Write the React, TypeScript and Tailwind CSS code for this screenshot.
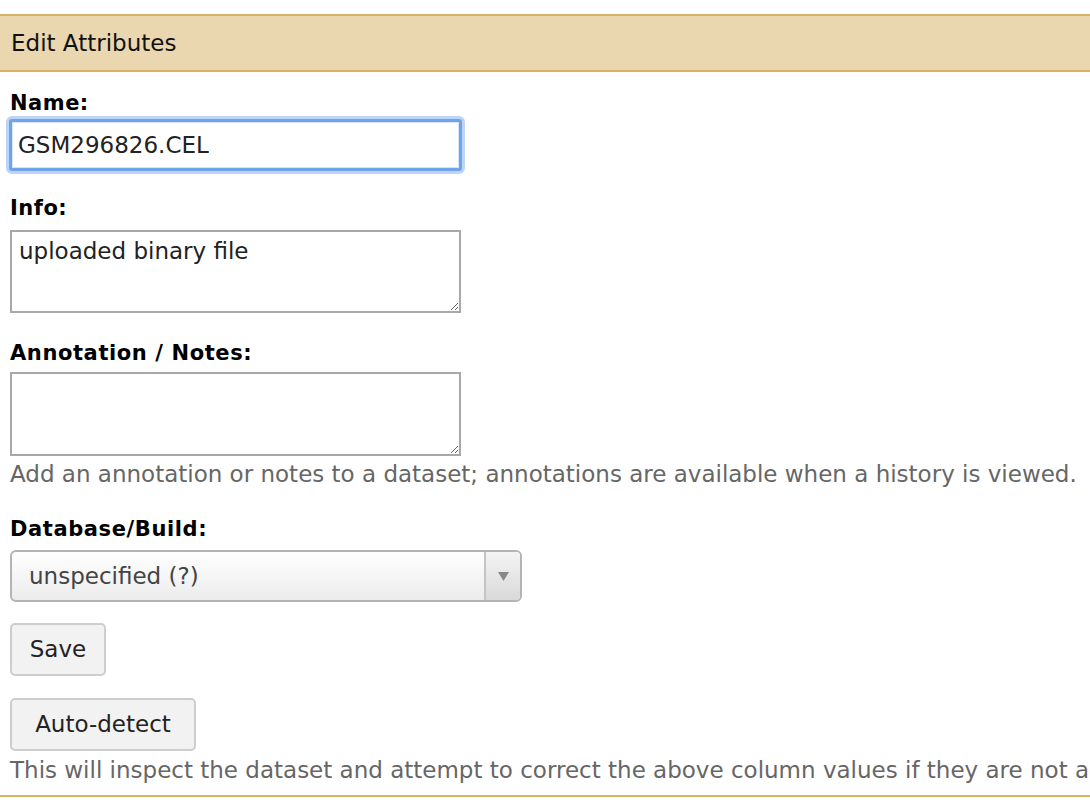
import React, { useState } from 'react';

export default function App() {
  const [name, setName] = useState('GSM296826.CEL');
  const [info, setInfo] = useState('uploaded binary file');
  const [notes, setNotes] = useState('');
  const [build, setBuild] = useState('?');

  return (
    <div className="min-h-[800px] overflow-hidden bg-white pt-[14px] font-['DejaVu_Sans',sans-serif] text-[#222]">
      {/* Header */}
      <div className="flex h-[58px] items-center border-y-2 border-[#d6b264] bg-[#ead7b0] px-[11px] text-[23px] text-[#111]">
        Edit Attributes
      </div>

      <form
        onSubmit={(e) => e.preventDefault()}
        className="flex flex-col items-start border-b-2 border-[#d6b264] px-[10px] pb-[13px]"
      >
        {/* Name */}
        <label className="mt-[19px] text-[21px] leading-[24px] font-bold tracking-[0.5px] text-black">Name:</label>
        <input
          type="text"
          value={name}
          onChange={(e) => setName(e.target.value)}
          className="ml-[-1px] mt-[4px] h-[52px] w-[453px] rounded-[3px] border-[3px] border-[#6fa3ea] bg-white pl-[6px] text-[23px] text-[#222] shadow-[0_0_0_3px_#bcd5f6,inset_0_0_0_1px_#d4e4f9] outline-none"
        />

        {/* Info */}
        <label className="mt-[25px] text-[21px] leading-[24px] font-bold tracking-[0.5px] text-black">Info:</label>
        <textarea
          value={info}
          onChange={(e) => setInfo(e.target.value)}
          className="mt-[10px] h-[83px] w-[451px] border-2 border-[#a8a8a8] px-[7px] pt-[5px] text-[23px] leading-[28px] text-[#222] outline-none"
        />

        {/* Annotation */}
        <label className="mt-[28px] text-[21px] leading-[24px] font-bold tracking-[0.6px] text-black">Annotation / Notes:</label>
        <textarea
          value={notes}
          onChange={(e) => setNotes(e.target.value)}
          className="mt-[7px] h-[84px] w-[451px] border-2 border-[#a8a8a8] px-[7px] pt-[5px] text-[23px] leading-[28px] text-[#222] outline-none"
        />
        <div className="mt-[6px] whitespace-nowrap text-[23px] leading-[24px] text-[#666]">
          Add an annotation or notes to a dataset; annotations are available when a history is viewed.
        </div>

        {/* Database / Build */}
        <label className="mt-[31px] text-[21px] leading-[24px] font-bold tracking-[0.6px] text-black">Database/Build:</label>
        <div className="mt-[9px] flex h-[52px] w-[512px] overflow-hidden rounded-[6px] border-2 border-[#b4b4b4] bg-gradient-to-b from-white to-[#ececec]">
          <button
            type="button"
            onClick={() => setBuild(build)}
            className="flex flex-1 items-center pl-[17px] text-left text-[23px] text-[#444]"
          >
            unspecified (?)
          </button>
          <div className="flex w-[36px] items-center justify-center border-l-2 border-[#c4c4c4] bg-gradient-to-b from-[#f4f4f4] to-[#d9d9d9]">
            <svg width="11" height="9" viewBox="0 0 11 9">
              <path d="M0 0 L11 0 L5.5 9 Z" fill="#888" />
            </svg>
          </div>
        </div>

        {/* Buttons */}
        <button
          type="submit"
          className="mt-[21px] h-[53px] w-[96px] rounded-[5px] border-2 border-[#cdcdcd] bg-[#f2f2f2] text-[23px] text-[#222]"
        >
          Save
        </button>
        <button
          type="button"
          className="mt-[22px] h-[53px] w-[186px] rounded-[5px] border-2 border-[#cdcdcd] bg-[#f2f2f2] text-[23px] text-[#222]"
        >
          Auto-detect
        </button>
        <div className="mt-[7px] whitespace-nowrap text-[23px] leading-[24px] text-[#666]">
          This will inspect the dataset and attempt to correct the above column values if they are not accurate.
        </div>
      </form>
    </div>
  );
}
